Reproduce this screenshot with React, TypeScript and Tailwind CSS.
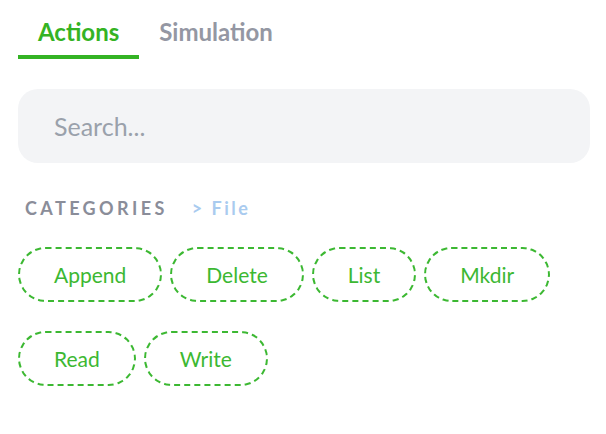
import { useState } from 'react'

const actions = ['Append', 'Delete', 'List', 'Mkdir', 'Read', 'Write']

export default function App() {
  const [tab, setTab] = useState('actions')

  return (
    <div className="min-h-[434px] w-[606px] bg-white pl-[18px] pr-4 font-['Lato',sans-serif]">
      <div className="flex pt-[17px]">
        {[
          { id: 'actions', label: 'Actions' },
          { id: 'simulation', label: 'Simulation' },
        ].map((item) => (
          <button
            key={item.id}
            type="button"
            onClick={() => setTab(item.id)}
            className={
              tab === item.id
                ? 'border-b-4 border-[#34b324] px-5 pb-2 text-[24px] font-bold leading-[30px] text-[#34b324]'
                : 'border-b-4 border-transparent px-5 pb-2 text-[24px] font-bold leading-[30px] text-[#9497a3]'
            }
          >
            {item.label}
          </button>
        ))}
      </div>

      <input
        placeholder="Search..."
        className="mt-[30px] h-[74px] w-full rounded-[20px] bg-[#f3f4f6] px-9 text-[25px] text-[#374151] outline-none placeholder:text-[#9aa1ab]"
      />

      <div className="mt-[35px] flex items-center pl-[7px] text-[18px] font-bold leading-5">
        <span className="tracking-[3.4px] text-[#8a8d99]">CATEGORIES</span>
        <span className="ml-[24px] tracking-[2.5px] text-[#a9cbef]">&gt; File</span>
      </div>

      <div className="mt-[29px] flex flex-wrap gap-x-[8px] gap-y-[29px]">
        {actions.map((action) => (
          <button
            key={action}
            type="button"
            className="h-[55px] rounded-full border-2 border-dashed border-[#3cb832] px-[34px] text-[21px] text-[#3cb832]"
          >
            {action}
          </button>
        ))}
      </div>
    </div>
  )
}
